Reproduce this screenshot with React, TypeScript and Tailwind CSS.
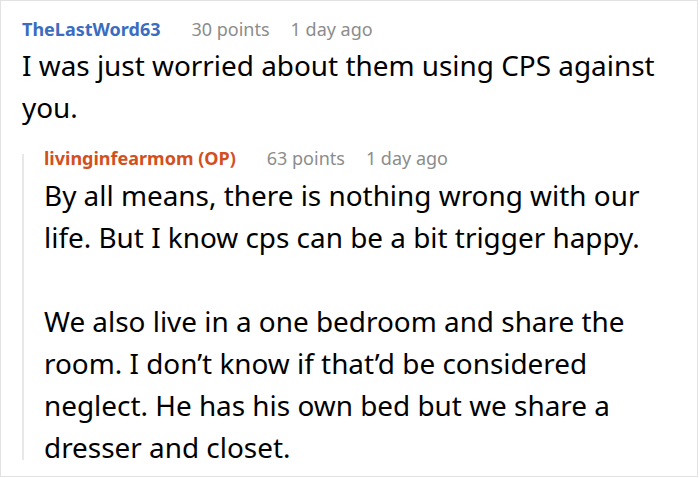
export default function App() {
  return (
    <div className="h-[478px] w-[700px] bg-white" style={{ fontFamily: '"Noto Sans", sans-serif' }}>
      <div className="h-[477px] w-[698px] overflow-hidden border border-[#e2e2e2] pl-[21px] pr-4 pt-4">
        <div className="flex h-6 items-center text-[18px] leading-6">
          <span className="font-bold text-[#3a6dc0]">TheLastWord63</span>
          <span className="ml-[31px] text-[#8c8c8c]">30 points</span>
          <span className="ml-[21px] text-[#8c8c8c]">1 day ago</span>
        </div>
        <p className="mt-[3px] w-[650px] text-[27.9px] leading-[42px] text-black">
          I was just worried about them using CPS against you.
        </p>
        <div className="mt-[18px] flex">
          <div className="my-2 w-[2px] shrink-0 bg-[#e8e8e8]" />
          <div className="pl-[20px]">
            <div className="flex h-6 items-center text-[18px] leading-6">
              <span className="font-bold text-[#d2501e]">livinginfearmom (OP)</span>
              <span className="ml-[31px] text-[#8c8c8c]">63 points</span>
              <span className="ml-[21px] text-[#8c8c8c]">1 day ago</span>
            </div>
            <div className="mt-[4px] w-[630px] text-[27.9px] leading-[42px] text-black">
              <p>By all means, there is nothing wrong with our life. But I know cps can be a bit trigger happy.</p>
              <p className="mt-[42px]">
                We also live in a one bedroom and share the room. I don’t know if that’d be considered neglect. He
                has his own bed but we share a dresser and closet.
              </p>
            </div>
          </div>
        </div>
      </div>
    </div>
  );
}
